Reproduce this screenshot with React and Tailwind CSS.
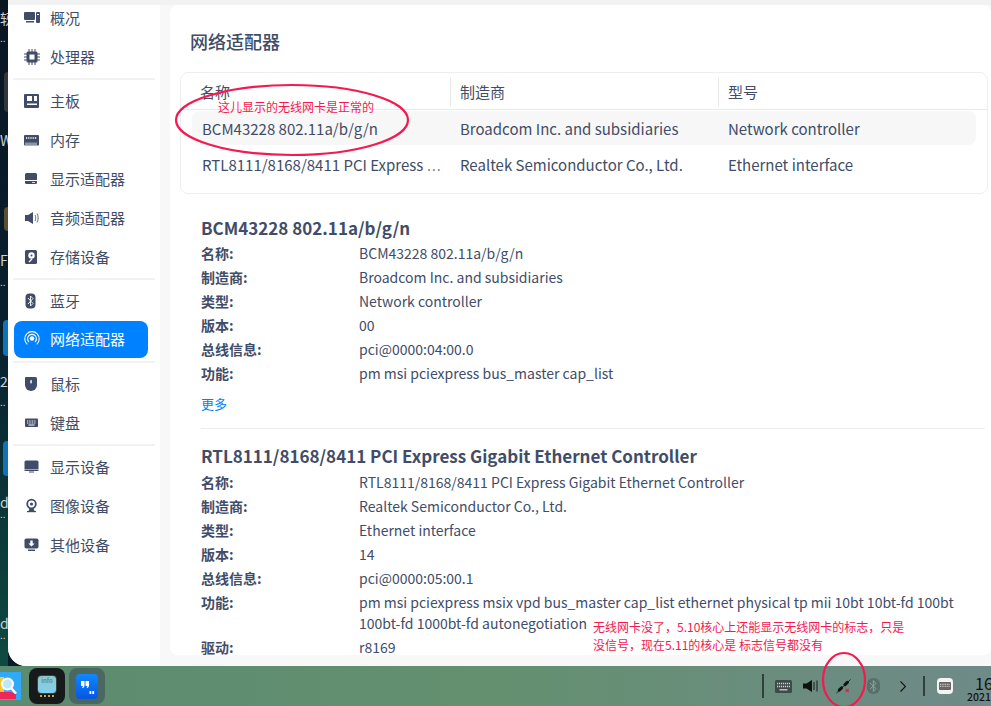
import React from 'react';

const ink = '#414d68';

// sidebar icons, all on a 16x16 box
function DeviceIcon({ name, color = ink }) {
  const p = { fill: color };
  const icons = {
    overview: <><rect x="0" y="2" width="11" height="8" rx="1" {...p} /><rect x="2" y="11" width="8" height="1.500" {...p} /><rect x="12" y="2" width="4" height="11" rx="1" {...p} /><rect x="13" y="4" width="2" height="1" fill="#fff" /></>,
    cpu: <><path d="M5 0v16M8 0v16M11 0v16M0 5h16M0 8h16M0 11h16" stroke={color} strokeWidth="1" /><rect x="2.500" y="2.500" width="11" height="11" rx="1.500" {...p} /><rect x="5.500" y="5.500" width="5" height="5" fill="#fff" /></>,
    board: <><rect x="0" y="1" width="15" height="14" rx="1" {...p} /><rect x="3" y="3" width="5" height="5" fill="#fff" /><rect x="10" y="3" width="3" height="5" fill="#fff" /><rect x="3" y="10.500" width="10" height="1.500" fill="#fff" /></>,
    ram: <><rect x="0" y="3" width="15" height="10.500" rx="1" {...p} /><path d="M2 6h11" stroke="#fff" strokeWidth="1.400" strokeDasharray="1 0.800" /><path d="M2 13.500v-3M4 13.500v-3M6 13.500v-3M8 13.500v-3M10 13.500v-3M12 13.500v-3" stroke="#fff" strokeWidth="0.800" /></>,
    gpu: <><path d="M2.500 2h9A1.500 1.500 0 0 1 13 3.500V9H1V3.500A1.500 1.500 0 0 1 2.500 2z" {...p} /><path d="M1 10h12v1.500A1.500 1.500 0 0 1 11.500 13h-9A1.500 1.500 0 0 1 1 11.500z" {...p} /><path d="M8 11.500h3" stroke="#fff" strokeWidth="0.800" /></>,
    sound: <><path d="M1 5h3l5-3v12l-5-3H1z" {...p} /><path d="M11 5c1 2 1 4 0 6M13 3.500c1.600 3 1.600 6 0 9" stroke={color} strokeWidth="0.800" fill="none" /></>,
    disk: <><rect x="1" y="1" width="12" height="14" rx="1.500" {...p} /><circle cx="7.500" cy="6.500" r="3.200" fill="#fff" /><circle cx="7.500" cy="6.500" r="1" {...p} /><path d="M5 13l3-3" stroke="#fff" strokeWidth="1.200" /></>,
    bluetooth: <><rect x="1.500" y="0.500" width="10" height="15" rx="4" {...p} /><path d="M4 5l5 5.500-2.500 2.500v-10L9 5.500 4 11" stroke="#fff" strokeWidth="0.900" fill="none" /></>,
    network: <><circle cx="8" cy="7.500" r="2.300" {...p} /><path d="M5 11a4.400 4.400 0 1 1 6 0M3.300 13.300a7.200 7.200 0 1 1 9.400 0" stroke={color} strokeWidth="1.100" fill="none" /></>,
    mouse: <><path d="M2 1h9.500A1.500 1.500 0 0 1 13 2.500V9a6 6 0 0 1-12 0V2a1 1 0 0 1 1-1z" {...p} /><rect x="6.300" y="4" width="1.500" height="3.500" rx="0.700" fill="#fff" /></>,
    keyboard: <><rect x="1" y="3.500" width="13" height="8.500" rx="0.800" {...p} /><path d="M3 6h9M3 8h9" stroke="#fff" strokeWidth="1" strokeDasharray="1 0.700" /><path d="M4.500 10h6" stroke="#fff" strokeWidth="1" /></>,
    monitor: <><path d="M2 1.500h11A1.500 1.500 0 0 1 14.500 3v7.500H.500V3A1.500 1.500 0 0 1 2 1.500z" {...p} /><rect x="0.500" y="11" width="14" height="1" {...p} /><rect x="5" y="12.500" width="5" height="1" {...p} /></>,
    camera: <><circle cx="7.500" cy="6" r="4.300" fill="none" stroke={color} strokeWidth="1.800" /><circle cx="7.500" cy="6" r="1.600" {...p} /><path d="M5.500 10.500h4l1 2.500h-6z" {...p} /><rect x="3" y="13" width="9" height="1.200" {...p} /></>,
    other: <><rect x="0.500" y="1.500" width="14" height="10" rx="1.800" {...p} /><path d="M6.300 3.500h2.400v3h2L7.500 9.500l-3.200-3h2z" fill="#fff" /><rect x="4" y="12.500" width="7" height="1.500" {...p} /></>,
  };
  return <svg width="16" height="16" viewBox="0 0 16 16" className="shrink-0">{icons[name]}</svg>;
}

const groups = [
  [['overview', '概况'], ['cpu', '处理器']],
  [['board', '主板'], ['ram', '内存'], ['gpu', '显示适配器'], ['sound', '音频适配器'], ['disk', '存储设备']],
  [['bluetooth', '蓝牙'], ['network', '网络适配器', true]],
  [['mouse', '鼠标'], ['keyboard', '键盘']],
  [['monitor', '显示设备'], ['camera', '图像设备'], ['other', '其他设备']],
];

function Sidebar() {
  return (
    <div className="w-[152px] shrink-0 bg-white rounded-bl-[18px] overflow-hidden">
      <div className="-mt-[6.500px]">
        {groups.map((g, i) => (
          <div key={i}>
            {i > 0 && <div className="h-[2px] mx-[5px] my-[1.500px] bg-[#f2f2f2]" />}
            {g.map(([icon, label, active]) => (
              <div key={label} className="h-[39px] flex items-center">
                <div className={`w-[134px] h-[37px] ml-[6px] pl-[10px] flex items-center gap-[10px] rounded-lg text-[15px] ${active ? 'bg-[#0081ff] text-white mb-[2px]' : ''}`} style={active ? undefined : { color: ink }}>
                  <DeviceIcon name={icon} color={active ? '#fff' : ink} />
                  <span>{label}</span>
                </div>
              </div>
            ))}
          </div>
        ))}
      </div>
    </div>
  );
}

function InfoRow({ label, children, tall }) {
  return (
    <div className={`flex ${tall ? 'leading-[21px] pt-[1.500px] pb-[1.500px]' : 'h-[24px] items-center'}`}>
      <div className="w-[158px] shrink-0 font-bold">{label}</div>
      <div className="flex-1">{children}</div>
    </div>
  );
}

function Main() {
  return (
    <div className="flex-1 mb-[11px] ml-[10px] bg-white rounded-lg overflow-hidden text-[#414d68] text-[14px] relative">
      <h1 className="h-[67px] pl-[20px] pt-[20px] text-[18px] leading-[32px] font-medium">网络适配器</h1>

      <div className="ml-[10px] w-[808px] h-[122px] border border-[#eeeeee] rounded-lg px-[11px] text-[15px]">
        <div className="h-[37px] pt-[1px] flex items-center border-b border-[#e8e8e8] -mx-[11px]">
          <div className="w-[270px] pl-[19px] pt-[2px] h-[28px] flex items-center border-r border-[#e8e8e8]">名称</div>
          <div className="w-[268px] pl-[9px] pt-[2px] h-[28px] flex items-center border-r border-[#e8e8e8]">制造商</div>
          <div className="pl-[9px] pt-[2px]">型号</div>
        </div>
        <div className="mt-[1px] h-[34px] pt-[2px] flex items-center bg-[#f7f7f7] rounded-lg">
          <div className="w-[258px] pl-[10px]">BCM43228 802.11a/b/g/n</div>
          <div className="w-[268px] pl-[10px]">Broadcom Inc. and subsidiaries</div>
          <div className="pl-[10px]">Network controller</div>
        </div>
        <div className="h-[37px] pt-[3px] flex items-center">
          <div className="w-[258px] pl-[10px] whitespace-nowrap">RTL8111/8168/8411 PCI Express <span className="text-[13px]">⋯</span></div>
          <div className="w-[268px] pl-[10px]">Realtek Semiconductor Co., Ltd.</div>
          <div className="pl-[10px]">Ethernet interface</div>
        </div>
      </div>

      <div className="pl-[31px] pr-[6px] pt-[20px]">
        <h2 className="text-[17px] font-bold h-[27px] leading-[28px]">BCM43228 802.11a/b/g/n</h2>
        <InfoRow label="名称:">BCM43228 802.11a/b/g/n</InfoRow>
        <InfoRow label="制造商:">Broadcom Inc. and subsidiaries</InfoRow>
        <InfoRow label="类型:">Network controller</InfoRow>
        <InfoRow label="版本:">00</InfoRow>
        <InfoRow label="总线信息:">pci@0000:04:00.0</InfoRow>
        <InfoRow label="功能:">pm msi pciexpress bus_master cap_list</InfoRow>
        <div className="h-[36px] pt-[7px] text-[#0081ff] text-[13px] leading-[24px]">更多</div>
        <div className="h-px bg-[#eeeeee] mt-[7px] mb-[14px]" />
        <h2 className="text-[17px] font-bold h-[27px] leading-[26px]">RTL8111/8168/8411 PCI Express Gigabit Ethernet Controller</h2>
        <InfoRow label="名称:">RTL8111/8168/8411 PCI Express Gigabit Ethernet Controller</InfoRow>
        <InfoRow label="制造商:">Realtek Semiconductor Co., Ltd.</InfoRow>
        <InfoRow label="类型:">Ethernet interface</InfoRow>
        <InfoRow label="版本:">14</InfoRow>
        <InfoRow label="总线信息:">pci@0000:05:00.1</InfoRow>
        <InfoRow label="功能:" tall>pm msi pciexpress msix vpd bus_master cap_list ethernet physical tp mii 10bt 10bt-fd 100bt 100bt-fd 1000bt-fd autonegotiation</InfoRow>
        <InfoRow label="驱动:">r8169</InfoRow>
      </div>
    </div>
  );
}

function Dock() {
  return (
    <div className="h-[40px] flex items-center bg-gradient-to-r from-[#5b8b70] via-[#64906f] to-[#6f8a88] relative overflow-hidden">
      <div className="w-[21px] h-[28px] shrink-0">
        <svg width="21" height="28" viewBox="0 0 21 28">
          <rect width="21" height="28" fill="#30a9f6" />
          <path d="M0 5h4v15H0z" fill="#f6c93a" />
          <path d="M0 20h11l5 2v5H0z" fill="#f0265a" />
          <circle cx="7.500" cy="12" r="5.500" fill="#bfe6fb" stroke="#fff" strokeWidth="2" />
          <path d="M11.500 16.500l4.500 5" stroke="#fff" strokeWidth="2.500" />
        </svg>
      </div>
      <div className="ml-[8px] w-[36px] h-[36px] rounded-lg bg-[#171a1a] flex flex-col items-center justify-center shrink-0">
        <div className="w-[20px] h-[19px] rounded-sm bg-gradient-to-b from-[#8fc8c8] to-[#7fd0f0] border border-[#3a3f3f] text-[6px] leading-[10px] text-[#5f8f9a] text-center font-bold">info</div>
        <div className="mt-[1px] w-[14px] h-[2px] border-t-2 border-dotted border-[#c9a63a]" />
      </div>
      <div className="ml-[4px] w-[36px] h-[36px] rounded-lg bg-[#4b6860] flex items-center justify-center shrink-0">
        <div className="w-[22px] h-[25px] rounded-sm bg-gradient-to-b from-[#1288ff] to-[#0a55e0]">
          <svg width="22" height="25" viewBox="0 0 22 25">
            <path d="M5 7h3.500v5L7.300 14H6l1-2H5zM9.500 7H13v5l-1.200 2h-1.300l1-2h-2z" fill="#fff" />
            <path d="M13.500 17h1.800v3h-1.800zM16.300 17h1.800v3h-1.800z" fill="#fff" />
          </svg>
        </div>
      </div>

      {/* the tray runs past the right edge of the screenshot */}
      <div className="ml-auto -mr-[8px] flex items-center h-full shrink-0 w-[237px]">
        <div className="w-[2px] h-[24px] bg-[#2f403d] shrink-0" />
        <svg width="17" height="13" viewBox="0 0 17 13" className="ml-[11px] shrink-0">
          <rect width="17" height="13" rx="1.500" fill="#3d4a48" />
          <path d="M2 3.500h13M2 6.500h13" stroke="#c9d2cf" strokeWidth="1.300" strokeDasharray="1.200 0.800" />
          <path d="M4.500 9.800h8" stroke="#c9d2cf" strokeWidth="1.300" />
        </svg>
        <svg width="16" height="14" viewBox="0 0 16 14" className="ml-[11px] shrink-0">
          <path d="M0 4.500h3.500L9 1v12L3.500 9.500H0z" fill="#111" />
          <path d="M11 3v8M14 1.500v11" stroke="#111" strokeWidth="0.900" />
        </svg>
        <svg width="15" height="15" viewBox="0 0 15 15" className="ml-[17px] shrink-0">
          <path d="M0.500 14L14.500 0.500" stroke="#111" strokeWidth="0.900" />
          <path d="M3.200 11.100l2.400-2.300M9 5.600l2.400-2.300" stroke="#111" strokeWidth="3" strokeLinecap="round" />
          <path d="M9.700 10l3 3M12.700 10l-3 3" stroke="#f01c3c" strokeWidth="1.200" />
        </svg>
        <svg width="13" height="16" viewBox="0 0 13 16" className="ml-[16px] shrink-0">
          <rect width="13" height="16" rx="6" fill="#56706a" />
          <path d="M3 5l6 5.500-2.700 3V2.500L9 5.500 3 11" stroke="#8fa39d" strokeWidth="1" fill="none" />
        </svg>
        <svg width="6" height="11" viewBox="0 0 6 11" className="ml-[20px] shrink-0">
          <path d="M0.500 0.500l5 5-5 5" stroke="#111" strokeWidth="1.100" fill="none" />
        </svg>
        <div className="w-[2px] h-[20px] bg-[#2f403d] ml-[17px] shrink-0" />
        <div className="ml-[12px] w-[16px] h-[16px] rounded-[4px] bg-[#f4f4f4] flex items-center justify-center shrink-0">
          <svg width="12" height="8" viewBox="0 0 12 8">
            <rect width="12" height="8" rx="1" fill="#666" />
            <path d="M1 2.300h10M1 4.300h10" stroke="#eee" strokeWidth="0.900" strokeDasharray="1 0.700" />
          </svg>
        </div>
        <div className="ml-[14px] w-[24px] shrink-0 pt-[4px] text-[#111] whitespace-nowrap">
          <div className="text-[16px] leading-[16px] pl-[8px]">16</div>
          <div className="text-[10.500px] leading-[11px] font-medium">2021</div>
        </div>
      </div>
    </div>
  );
}

// slivers of the desktop icons that show left of the window
function DesktopSliver() {
  const glyphs = [
    ['轫', 'top-[10px]'], ['W', 'top-[132px]'], ['F', 'top-[252px]'], ['2', 'top-[373px]'], ['d', 'top-[494px]'], ['d', 'top-[615px]'],
  ];
  const dots = ['top-[36px]', 'top-[280px]', 'top-[400px]', 'top-[512px]', 'top-[633px]'];
  return (
    <div className="w-[8px] shrink-0 relative overflow-hidden bg-gradient-to-b from-[#0a1522] via-[#08202e] to-[#0f4a40] text-[#c9d2d6] text-[14px]">
      {glyphs.map(([g, top], i) => (
        <span key={i} className={`absolute left-0 leading-[16px] ${top}`}>{g}</span>
      ))}
      {dots.map((top, i) => (
        <span key={i} className={`absolute left-0 text-[10px] leading-[4px] ${top}`}>..</span>
      ))}
      <div className="absolute left-[4px] top-[72px] w-[10px] h-[40px] rounded bg-[#34373a]" />
      <div className="absolute left-[4px] top-[207px] w-[10px] h-[24px] rounded bg-[#5a4f30]" />
      <div className="absolute left-[3px] top-[320px] w-[10px] h-[36px] rounded bg-[#1272b8]" />
      <div className="absolute left-[3px] top-[441px] w-[10px] h-[35px] rounded bg-[#1272b8]" />
    </div>
  );
}

export default function App() {
  return (
    <div className="w-[991px] h-[706px] relative overflow-hidden" style={{ fontFamily: '"Noto Sans CJK SC", "Noto Sans", sans-serif' }}>
      <div className="h-[666px] flex bg-[#0a1a28]">
        <DesktopSliver />
        <div className="flex-1 flex flex-col bg-[#f8f8f8] rounded-bl-[18px] overflow-hidden">
          <div className="h-[5px] shrink-0 bg-[#f2f2f2]" />
          <div className="flex-1 flex min-h-0">
            <Sidebar />
            <Main />
          </div>
        </div>
      </div>
      <Dock />

      {/* red notes drawn on top of the screenshot */}
      <svg width="991" height="706" className="absolute inset-0 pointer-events-none" fill="none" stroke="#f5194f" strokeWidth="2.200">
        <ellipse cx="292" cy="120" rx="116" ry="35" />
        <ellipse cx="844" cy="680" rx="21" ry="27" />
      </svg>
      <div className="absolute left-[218px] top-[99px] text-[12px] leading-[16px] text-[#f5194f]">这儿显示的无线网卡是正常的</div>
      <div className="absolute left-[593px] top-[618px] text-[12px] leading-[18px] text-[#f5194f] whitespace-nowrap">
        <div>无线网卡没了，5.10核心上还能显示无线网卡的标志，只是</div>
        <div>没信号，现在5.11的核心是 标志信号都没有</div>
      </div>
    </div>
  );
}
